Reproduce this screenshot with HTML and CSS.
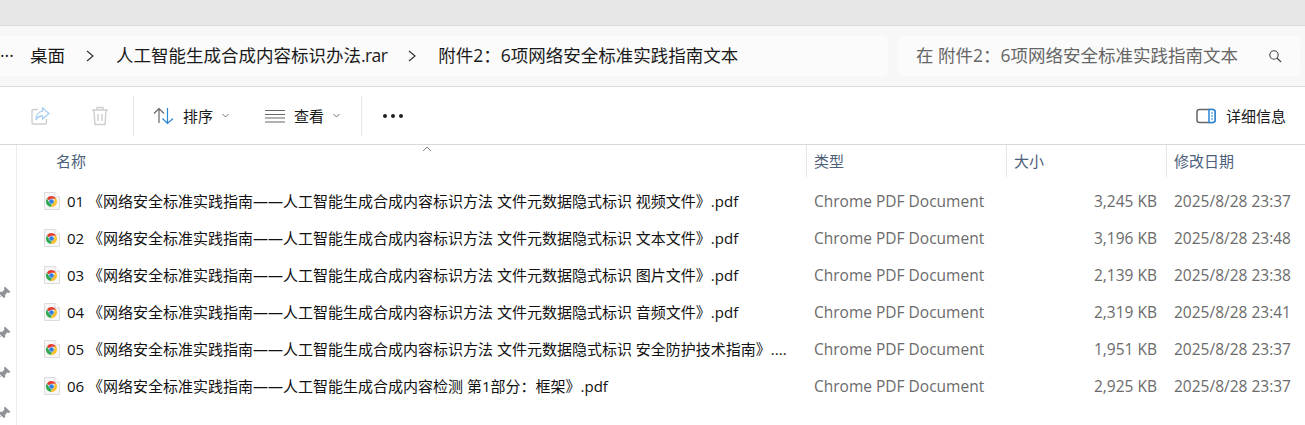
FILE: index.html
```html
<!DOCTYPE html>
<html>
	<head>
		<meta charset="utf-8"/>
		<title>附件2：6项网络安全标准实践指南文本</title>
		<link rel="stylesheet" href="styles.css">
	</head>
	<body>
		<svg class="defs" width="0" height="0">
			<symbol id="pdfIcon" viewBox="0 0 18 20">
				<path d="M1.5 1.5H12L16.5 6V18.5H1.5Z" fill="#f6f6f6" stroke="#dcdcdc"/>
				<path d="M12 1.5V6H16.5" fill="#fff" stroke="#dcdcdc"/>
				<path d="M8.5 5A5.5 5.5 0 0 1 13.3 7.8H8.5A2.7 2.7 0 0 0 6 9.4L3.9 7.4A5.5 5.5 0 0 1 8.5 5Z" fill="#e33b2e"/>
				<path d="M3.9 7.4L6.2 11.6A2.7 2.7 0 0 0 9 13.2L7.6 15.9A5.5 5.5 0 0 1 3.9 7.4Z" fill="#2fa84f"/>
				<path d="M13.3 7.8A5.5 5.5 0 0 1 7.6 15.9L10 11.8A2.7 2.7 0 0 0 10.8 7.8Z" fill="#fbc02d"/>
				<circle cx="8.5" cy="10.5" r="2.3" fill="#2f7fe0"/>
			</symbol>
			<symbol id="pin" viewBox="0 0 14 14">
				<path d="M8 .5L13.5 6L12 7L10.3 6.6L8.2 8.7L8.2 11L7 12.2L4.6 9.8L1.2 13.2L.8 12.8L4.2 9.4L1.8 7L3 5.8L5.3 5.8L7.4 3.7L7 2Z" fill="#8f9398"/>
			</symbol>
		</svg>

		<div class="titleBand"></div>

		<div class="addressBar">
			<div class="crumbs">
				<span class="crumbMore">···</span>
				<span class="crumb">桌面</span>
				<svg class="crumbArrow" width="10" height="14" viewBox="0 0 10 14"><path d="M2 2L8 7L2 12" fill="none" stroke="#333" stroke-width="1.2"/></svg>
				<span class="crumb">人工智能生成合成内容标识办法<span class="crumbExt">.rar</span></span>
				<svg class="crumbArrow" width="10" height="14" viewBox="0 0 10 14"><path d="M2 2L8 7L2 12" fill="none" stroke="#333" stroke-width="1.2"/></svg>
				<span class="crumb">附件2：6项网络安全标准实践指南文本</span>
			</div>
			<div class="searchBox">
				<span class="searchText">在 附件2：6项网络安全标准实践指南文本</span>
				<svg width="14" height="14" viewBox="0 0 14 14"><circle cx="6" cy="6" r="4.2" fill="none" stroke="#444" stroke-width="1.1"/><path d="M9 9L13 13" stroke="#444" stroke-width="1.2"/></svg>
			</div>
		</div>

		<div class="toolbar">
			<div class="toolGroup firstGroup">
				<svg width="20" height="20" viewBox="0 0 20 20"><path d="M8 3.5H3.5A1.5 1.5 0 0 0 2 5V16.5A1.5 1.5 0 0 0 3.5 18H15A1.5 1.5 0 0 0 16.5 16.5V13" fill="none" stroke="#cfcfcf" stroke-width="1.4"/><path d="M12.5 2L19 7.5L12.5 13V10C9 10 7 11.5 6 14C6 9.5 8.5 5.8 12.5 5.2Z" fill="#fff" stroke="#a9d0f2" stroke-width="1.3"/></svg>
				<svg width="18" height="20" viewBox="0 0 18 20"><path d="M1 4H17M6 4V1.5H12V4M3 4L4 18.5H14L15 4M7 8V15M11 8V15" fill="none" stroke="#cfcfcf" stroke-width="1.4"/></svg>
			</div>
			<div class="toolGroup">
				<div class="toolBtn sortBtn">
					<svg width="21" height="18" viewBox="0 0 21 18"><path d="M6 16V2M1 6.5L6 1.5L11 6.5" fill="none" stroke="#666" stroke-width="1.2"/><path d="M14.5 1V16.5M9.5 11.5L14.5 16.5L20 11.5" fill="none" stroke="#2a86d8" stroke-width="1.2"/></svg>
					<span class="toolLabel">排序</span>
					<svg width="7" height="5" viewBox="0 0 7 5"><path d="M.5 1L3.5 4L6.5 1" fill="none" stroke="#777"/></svg>
				</div>
				<div class="toolBtn viewBtn">
					<svg width="20" height="14" viewBox="0 0 20 14"><path d="M0 1.5H20M0 5.5H20M0 9H20M0 13H20" stroke="#666" stroke-width="1.1"/></svg>
					<span class="toolLabel">查看</span>
					<svg width="7" height="5" viewBox="0 0 7 5"><path d="M.5 1L3.5 4L6.5 1" fill="none" stroke="#777"/></svg>
				</div>
			</div>
			<div class="toolGroup moreGroup">
				<span class="dot"></span><span class="dot"></span><span class="dot"></span>
			</div>
			<div class="detailsBtn">
				<svg width="20" height="16" viewBox="0 0 20 16"><rect x="1" y="1.5" width="18" height="13" rx="2.5" fill="#fff" stroke="#666" stroke-width="1.5"/><path d="M13 1.5H16.5A2.5 2.5 0 0 1 19 4V12A2.5 2.5 0 0 1 16.5 14.5H13Z" fill="#fff" stroke="#2a86d8" stroke-width="1.5"/><path d="M15 5H17M15 8H17M15 11H17" stroke="#2a86d8"/></svg>
				<span class="toolLabel">详细信息</span>
			</div>
		</div>

		<div class="content">
			<div class="sidebar">
				<svg class="pinIcon" width="14" height="14"><use href="#pin"/></svg>
				<svg class="pinIcon" width="14" height="14"><use href="#pin"/></svg>
				<svg class="pinIcon" width="14" height="14"><use href="#pin"/></svg>
				<svg class="pinIcon" width="14" height="14"><use href="#pin"/></svg>
			</div>
			<div class="fileList">
				<svg class="sortCaret" width="10" height="6" viewBox="0 0 10 6"><path d="M1 5L5 1L9 5" fill="none" stroke="#888"/></svg>
				<div class="row headRow">
					<div class="cell cellName">名称</div>
					<div class="cell">类型</div>
					<div class="cell">大小</div>
					<div class="cell">修改日期</div>
				</div>
				<div class="rows">
					<div class="row fileRow">
						<div class="cell cellName"><svg width="18" height="20"><use href="#pdfIcon"/></svg><span class="fileName">01 《网络安全标准实践指南——人工智能生成合成内容标识方法 文件元数据隐式标识 视频文件》.pdf</span></div>
						<div class="cell">Chrome PDF Document</div>
						<div class="cell cellSize">3,245 KB</div>
						<div class="cell">2025/8/28 23:37</div>
					</div>
					<div class="row fileRow">
						<div class="cell cellName"><svg width="18" height="20"><use href="#pdfIcon"/></svg><span class="fileName">02 《网络安全标准实践指南——人工智能生成合成内容标识方法 文件元数据隐式标识 文本文件》.pdf</span></div>
						<div class="cell">Chrome PDF Document</div>
						<div class="cell cellSize">3,196 KB</div>
						<div class="cell">2025/8/28 23:48</div>
					</div>
					<div class="row fileRow">
						<div class="cell cellName"><svg width="18" height="20"><use href="#pdfIcon"/></svg><span class="fileName">03 《网络安全标准实践指南——人工智能生成合成内容标识方法 文件元数据隐式标识 图片文件》.pdf</span></div>
						<div class="cell">Chrome PDF Document</div>
						<div class="cell cellSize">2,139 KB</div>
						<div class="cell">2025/8/28 23:38</div>
					</div>
					<div class="row fileRow">
						<div class="cell cellName"><svg width="18" height="20"><use href="#pdfIcon"/></svg><span class="fileName">04 《网络安全标准实践指南——人工智能生成合成内容标识方法 文件元数据隐式标识 音频文件》.pdf</span></div>
						<div class="cell">Chrome PDF Document</div>
						<div class="cell cellSize">2,319 KB</div>
						<div class="cell">2025/8/28 23:41</div>
					</div>
					<div class="row fileRow">
						<div class="cell cellName"><svg width="18" height="20"><use href="#pdfIcon"/></svg><span class="fileName">05 《网络安全标准实践指南——人工智能生成合成内容标识方法 文件元数据隐式标识 安全防护技术指南》....</span></div>
						<div class="cell">Chrome PDF Document</div>
						<div class="cell cellSize">1,951 KB</div>
						<div class="cell">2025/8/28 23:37</div>
					</div>
					<div class="row fileRow">
						<div class="cell cellName"><svg width="18" height="20"><use href="#pdfIcon"/></svg><span class="fileName">06 《网络安全标准实践指南——人工智能生成合成内容检测 第1部分：框架》.pdf</span></div>
						<div class="cell">Chrome PDF Document</div>
						<div class="cell cellSize">2,925 KB</div>
						<div class="cell">2025/8/28 23:37</div>
					</div>
				</div>
			</div>
		</div>
	</body>
</html>
```

FILE: styles.css
```css
/*main layout*/
html, body{
	height: 100%;
}
body{
	margin: 0;
	display: flex;
	flex-direction: column;
	overflow: hidden;
	background-color: #ffffff;
	color: #1a1a1a;
	font-family: "Open Sans", "Noto Sans CJK SC", sans-serif;
}
.defs{
	position: absolute;
}
.titleBand{
	height: 25px;
	flex: none;
	background-color: #e6e6e6;
	border-bottom: solid 1px #d9d9d9;
}

/*address bar and search*/
.addressBar{
	display: flex;
	flex: none;
	gap: 10px;
	height: 40px;
	padding: 10px 5px 10px 0;
	background-color: #f7f7f7;
	border-bottom: solid 1px #d9d9d9;
}
.crumbs{
	display: flex;
	align-items: center;
	width: 888px;
	background-color: #fbfbfb;
	border-radius: 0 6px 6px 0;
	font-size: 17.5px;
	white-space: nowrap;
}
.crumb{
	padding-bottom: 3px;
}
.crumbExt{
	letter-spacing: -0.6px;
}
.crumbMore{
	width: 30px;
	padding-bottom: 3px;
}
.crumbArrow{
	margin: 0 21px 0 20px;
}
.searchBox{
	display: flex;
	align-items: center;
	justify-content: space-between;
	flex: 1;
	padding: 0 18px;
	background-color: #fbfbfb;
	border-radius: 6px;
}
.searchText{
	padding-bottom: 3px;
	font-size: 17.5px;
	color: #666666;
	white-space: nowrap;
}

/*toolbar*/
.toolbar{
	display: flex;
	align-items: center;
	flex: none;
	height: 57px;
	border-bottom: solid 1px #d9d9d9;
}
.toolGroup{
	display: flex;
	align-items: center;
	height: 40px;
	border-right: solid 1px #e8e8e8;
}
.firstGroup{
	width: 134px;
	gap: 41px;
	padding-left: 30px;
	box-sizing: border-box;
}
.toolBtn{
	display: flex;
	align-items: center;
	gap: 9px;
	box-sizing: border-box;
}
.sortBtn{
	width: 131px;
	padding-left: 19px;
}
.viewBtn{
	width: 96px;
}
.toolLabel{
	font-size: 15px;
}
.moreGroup{
	gap: 4px;
	padding-left: 21px;
	border-right: 0;
}
.dot{
	width: 4px;
	height: 4px;
	border-radius: 50%;
	background-color: #222222;
}
.detailsBtn{
	display: flex;
	align-items: center;
	gap: 10px;
	margin-left: auto;
	padding-right: 19px;
}

/*sidebar and file list*/
.content{
	display: flex;
	flex: 1;
	min-height: 0;
}
.sidebar{
	display: flex;
	flex-direction: column;
	flex: none;
	gap: 26px;
	width: 16px;
	padding-top: 141px;
	overflow: hidden;
	border-right: solid 1px #ececec;
}
.pinIcon{
	flex: none;
	margin-left: -3px;
}
.fileList{
	position: relative;
	flex: 1;
	min-width: 0;
}
.sortCaret{
	position: absolute;
	left: 405px;
	top: 1px;
}
.row{
	display: grid;
	grid-template-columns: 789px 200px 160px 1fr;
}
.headRow{
	height: 32px;
	font-size: 15px;
	color: #4c607a;
}
.headRow .cell{
	border-left: solid 1px #e5e5e5;
	padding-left: 7px;
	line-height: 32px;
}
.headRow .cellName{
	border-left: 0;
	padding-left: 39px;
}
.rows{
	padding-top: 5px;
}
.fileRow{
	height: 37px;
	align-items: center;
	font-size: 15.5px;
	color: #6b6b6b;
	white-space: nowrap;
}
.fileRow .cell{
	padding-left: 8px;
}
.fileRow .cellName{
	display: flex;
	align-items: center;
	gap: 6px;
	padding-left: 26px;
	overflow: hidden;
	color: #111111;
}
.fileRow .cellSize{
	padding: 0 9px 0 0;
	text-align: right;
}
.fileName{
	font-size: 15px;
}
```
